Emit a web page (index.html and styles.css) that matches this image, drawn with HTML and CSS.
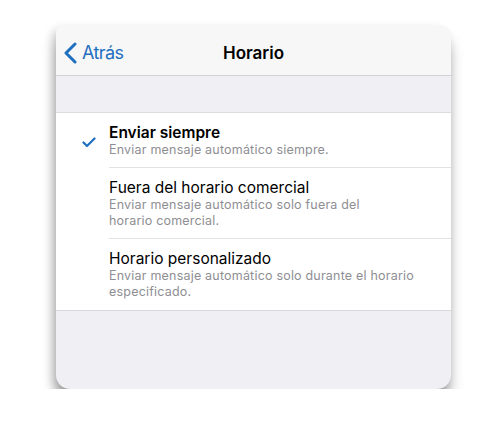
FILE: index.html
```html
<!DOCTYPE html>
<html lang="es">
<head>
  <meta charset="UTF-8">
  <meta name="viewport" content="width=device-width, initial-scale=1.0">
  <title>Horario</title>
  <link rel="stylesheet" href="styles.css">
</head>
<body>
  <div class="screen">
    <div class="nav">
      <a class="back" href="#">
        <svg class="chevron" width="14" height="22" viewBox="0 0 14 22">
          <path d="M12 2 L3 11 L12 20" fill="none" stroke="#1f6fc0" stroke-width="3" stroke-linecap="round" stroke-linejoin="round"/>
        </svg>
        <span>Atrás</span>
      </a>
      <div class="title">Horario</div>
    </div>

    <div class="gap"></div>

    <div class="list">
      <div class="row selected">
        <div class="mark">
          <svg width="14" height="11" viewBox="0 0 14 11">
            <path d="M1.5 5.5 L5 9 L12.5 1.5" fill="none" stroke="#1f6fc0" stroke-width="2.2" stroke-linecap="round" stroke-linejoin="round"/>
          </svg>
        </div>
        <div class="text">
          <div class="name">Enviar siempre</div>
          <div class="desc">Enviar mensaje automático siempre.</div>
        </div>
      </div>
      <div class="row">
        <div class="mark"></div>
        <div class="text">
          <div class="name">Fuera del horario comercial</div>
          <div class="desc">Enviar mensaje automático solo fuera del<br>horario comercial.</div>
        </div>
      </div>
      <div class="row">
        <div class="mark"></div>
        <div class="text">
          <div class="name">Horario personalizado</div>
          <div class="desc">Enviar mensaje automático solo durante el horario especificado.</div>
        </div>
      </div>
    </div>
  </div>
</body>
</html>
```

FILE: styles.css
```css
body {
  margin: 0;
  padding: 25px 0 0 56px;
  background: #fff;
  font-family: Inter, "Noto Sans", sans-serif;
  color: #111;
}
.screen {
  width: 395px;
  height: 364px;
  background: #efeff4;
  border-radius: 8px 12px 14px 14px;
  overflow: hidden;
  box-shadow: 0 13px 15px -3px rgba(0,0,0,0.42), -4px 4px 10px rgba(0,0,0,0.16);
}
.nav {
  height: 51px;
  box-sizing: border-box;
  padding-top: 5px;
  background: #f7f7f7;
  border-bottom: 1px solid #d2d2d6;
  display: flex;
  align-items: center;
  position: relative;
}
.back {
  display: flex;
  align-items: center;
  gap: 5px;
  padding-left: 7px;
  color: #1f6fc0;
  text-decoration: none;
  font-size: 18px;
  letter-spacing: -0.6px;
  z-index: 1;
}
.title {
  position: absolute;
  left: 0;
  right: 0;
  top: 5px;
  bottom: 0;
  display: flex;
  align-items: center;
  justify-content: center;
  font-size: 17px;
  font-weight: 600;
  color: #000;
}
.gap {
  height: 36px;
  border-bottom: 1px solid #dcdce0;
}
.list {
  background: #fff;
  border-bottom: 1px solid #d8d8dc;
}
.row {
  display: flex;
}
.mark {
  width: 53px;
  flex: none;
  display: flex;
  justify-content: center;
  padding-top: 24px;
  padding-left: 12px;
  box-sizing: border-box;
}
.text {
  flex: 1;
  padding: 10px 30px 9px 0;
  border-bottom: 1px solid #e2e2e6;
}
.row:last-child .text {
  border-bottom: none;
  padding-bottom: 10px;
}
.name {
  font-size: 15.5px;
  line-height: 19px;
  color: #000;
}
.selected .name {
  font-weight: 600;
}
.desc {
  font-size: 12.5px;
  line-height: 16px;
  color: #8e8e93;
  letter-spacing: 0.2px;
}
```
